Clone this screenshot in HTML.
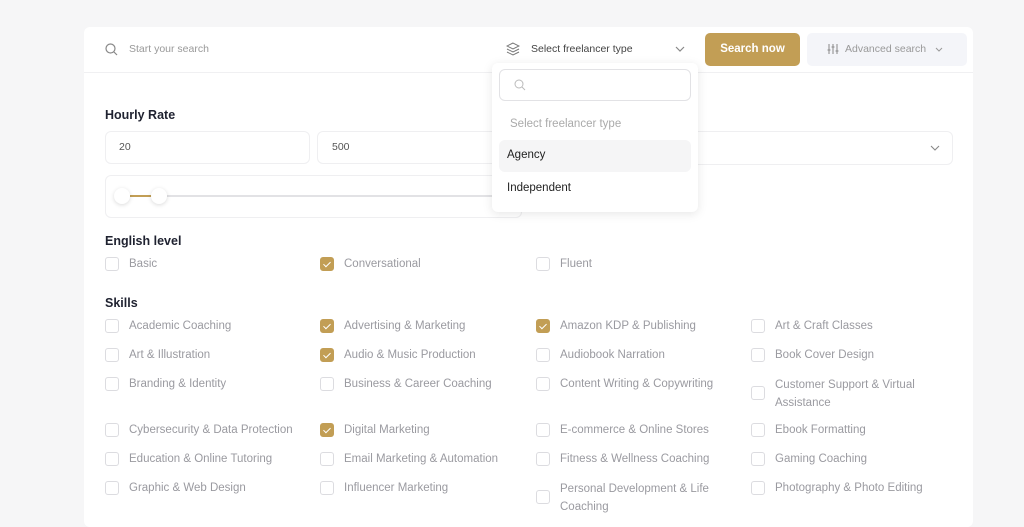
<!DOCTYPE html>
<html><head><style>
*{box-sizing:border-box;margin:0;padding:0}
body{width:1024px;height:519px;background:#f6f6f7;font-family:"Liberation Sans",sans-serif;position:relative;overflow:hidden}
.card{position:absolute;left:84px;top:27px;width:889px;height:500px;background:#fff;border-radius:6px}
.a{position:absolute}
.t{font-size:11.5px;color:#9a9aa0;white-space:nowrap}
.h{font-size:12.5px;font-weight:bold;color:#1f2230}
.cb{position:absolute;width:14px;height:14px;border:1px solid #dcdce0;border-radius:3px;background:#fff}
.cb.on{background:#c29e55;border-color:#c29e55}
.cb.on:after{content:"";position:absolute;left:4px;top:2px;width:3px;height:6px;border:solid #fff;border-width:0 1.5px 1.5px 0;transform:rotate(45deg)}
.box{position:absolute;border:1px solid #efeff1;border-radius:6px;background:#fff}
</style></head><body>
<div class="card"></div>
<div class="a" style="left:84px;top:72px;width:889px;height:1px;background:#f0f0f2"></div>
<svg class="a" style="left:105px;top:43px" width="13" height="13" viewBox="0 0 13 13" fill="none" stroke="#888" stroke-width="1.2"><circle cx="5.5" cy="5.5" r="4.5"/><path d="M9 9l3 3"/></svg>
<div class="a t" style="left:129px;top:43px;font-size:10.5px;color:#999">Start your search</div>
<svg class="a" style="left:506px;top:42px" width="14" height="14" viewBox="0 0 14 14" fill="none" stroke="#777" stroke-width="1"><path d="M7 1L1 4l6 3 6-3z"/><path d="M1 7l6 3 6-3"/><path d="M1 10l6 3 6-3"/></svg>
<div class="a" style="left:531px;top:43px;font-size:10.5px;color:#444">Select freelancer type</div>
<svg class="a" style="left:675px;top:46px" width="10" height="7" viewBox="0 0 10 7" fill="none" stroke="#888" stroke-width="1.2"><path d="M1 1l4 4 4-4"/></svg>
<div class="a" style="left:705px;top:33px;width:95px;height:33px;background:#c29e55;border-radius:5px;color:#fff;font-size:11.5px;font-weight:bold;text-align:center;line-height:33px">Search now</div>
<div class="a" style="left:807px;top:33px;width:160px;height:33px;background:#f4f5f9;border-radius:5px"></div>
<svg class="a" style="left:827px;top:43px" width="12" height="12" viewBox="0 0 12 12" fill="none" stroke="#888" stroke-width="1"><path d="M2 1v10M6 1v10M10 1v10M0.5 7h3M4.5 4h3M8.5 8h3"/></svg>
<div class="a" style="left:845px;top:43px;font-size:10.5px;color:#999">Advanced search</div>
<svg class="a" style="left:935px;top:47px" width="8" height="6" viewBox="0 0 8 6" fill="none" stroke="#999" stroke-width="1"><path d="M1 1l3 3 3-3"/></svg>

<div class="a h" style="left:105px;top:108px">Hourly Rate</div>
<div class="box" style="left:105px;top:131px;width:205px;height:33px"></div>
<div class="a t" style="left:119px;top:141px;font-size:10.5px;color:#555">20</div>
<div class="box" style="left:317px;top:131px;width:200px;height:33px"></div>
<div class="a t" style="left:332px;top:141px;font-size:10.5px;color:#555">500</div>
<div class="box" style="left:105px;top:175px;width:417px;height:43px"></div>
<div class="a" style="left:122px;top:195px;width:375px;height:2px;background:#e2e2e5"></div>
<div class="a" style="left:130px;top:195px;width:22px;height:2px;background:#c29e55"></div>
<div class="a" style="left:114px;top:188px;width:16px;height:16px;border-radius:50%;background:#fff;box-shadow:0 1px 4px rgba(0,0,0,.15)"></div>
<div class="a" style="left:151px;top:188px;width:16px;height:16px;border-radius:50%;background:#fff;box-shadow:0 1px 4px rgba(0,0,0,.15)"></div>
<div class="box" style="left:540px;top:131px;width:413px;height:34px"></div>
<svg class="a" style="left:930px;top:145px" width="10" height="7" viewBox="0 0 10 7" fill="none" stroke="#888" stroke-width="1.1"><path d="M1 1l4 4 4-4"/></svg>

<div class="a" style="left:492px;top:63px;width:206px;height:149px;background:#fff;border-radius:6px;box-shadow:0 2px 10px rgba(0,0,0,.1)"></div>
<div class="box" style="left:499px;top:69px;width:192px;height:32px;border-color:#e2e2e5"></div>
<svg class="a" style="left:514px;top:79px" width="12" height="12" viewBox="0 0 12 12" fill="none" stroke="#bbb" stroke-width="1"><circle cx="5" cy="5" r="4"/><path d="M8 8l3 3"/></svg>
<div class="a t" style="left:510px;top:118px;font-size:11.5px;color:#aaa">Select freelancer type</div>
<div class="a" style="left:499px;top:140px;width:192px;height:32px;background:#f5f5f6;border-radius:6px"></div>
<div class="a" style="left:507px;top:149px;font-size:11.5px;color:#222">Agency</div>
<div class="a" style="left:507px;top:182px;font-size:11.5px;color:#222">Independent</div>

<div class="a h" style="left:105px;top:234px">English level</div>
<div class="cb" style="left:105px;top:257px"></div><div class="a t" style="left:129px;top:258px">Basic</div>
<div class="cb on" style="left:320px;top:257px"></div><div class="a t" style="left:344px;top:258px">Conversational</div>
<div class="cb" style="left:536px;top:257px"></div><div class="a t" style="left:560px;top:258px">Fluent</div>

<div class="a h" style="left:105px;top:296px">Skills</div>
<div class="cb" style="left:105px;top:319px"></div><div class="a t" style="left:129px;top:320px">Academic Coaching</div>
<div class="cb on" style="left:320px;top:319px"></div><div class="a t" style="left:344px;top:320px">Advertising &amp; Marketing</div>
<div class="cb on" style="left:536px;top:319px"></div><div class="a t" style="left:560px;top:320px">Amazon KDP &amp; Publishing</div>
<div class="cb" style="left:751px;top:319px"></div><div class="a t" style="left:775px;top:320px">Art &amp; Craft Classes</div>

<div class="cb" style="left:105px;top:348px"></div><div class="a t" style="left:129px;top:349px">Art &amp; Illustration</div>
<div class="cb on" style="left:320px;top:348px"></div><div class="a t" style="left:344px;top:349px">Audio &amp; Music Production</div>
<div class="cb" style="left:536px;top:348px"></div><div class="a t" style="left:560px;top:349px">Audiobook Narration</div>
<div class="cb" style="left:751px;top:348px"></div><div class="a t" style="left:775px;top:349px">Book Cover Design</div>

<div class="cb" style="left:105px;top:377px"></div><div class="a t" style="left:129px;top:378px">Branding &amp; Identity</div>
<div class="cb" style="left:320px;top:377px"></div><div class="a t" style="left:344px;top:378px">Business &amp; Career Coaching</div>
<div class="cb" style="left:536px;top:377px"></div><div class="a t" style="left:560px;top:378px">Content Writing &amp; Copywriting</div>
<div class="cb" style="left:751px;top:386px"></div><div class="a t" style="left:775px;top:377px;line-height:18px;margin-top:-1px">Customer Support &amp; Virtual<br>Assistance</div>

<div class="cb" style="left:105px;top:423px"></div><div class="a t" style="left:129px;top:424px">Cybersecurity &amp; Data Protection</div>
<div class="cb on" style="left:320px;top:423px"></div><div class="a t" style="left:344px;top:424px">Digital Marketing</div>
<div class="cb" style="left:536px;top:423px"></div><div class="a t" style="left:560px;top:424px">E-commerce &amp; Online Stores</div>
<div class="cb" style="left:751px;top:423px"></div><div class="a t" style="left:775px;top:424px">Ebook Formatting</div>

<div class="cb" style="left:105px;top:452px"></div><div class="a t" style="left:129px;top:453px">Education &amp; Online Tutoring</div>
<div class="cb" style="left:320px;top:452px"></div><div class="a t" style="left:344px;top:453px">Email Marketing &amp; Automation</div>
<div class="cb" style="left:536px;top:452px"></div><div class="a t" style="left:560px;top:453px">Fitness &amp; Wellness Coaching</div>
<div class="cb" style="left:751px;top:452px"></div><div class="a t" style="left:775px;top:453px">Gaming Coaching</div>

<div class="cb" style="left:105px;top:481px"></div><div class="a t" style="left:129px;top:482px">Graphic &amp; Web Design</div>
<div class="cb" style="left:320px;top:481px"></div><div class="a t" style="left:344px;top:482px">Influencer Marketing</div>
<div class="cb" style="left:536px;top:490px"></div><div class="a t" style="left:560px;top:481px;line-height:18px;margin-top:-1px">Personal Development &amp; Life<br>Coaching</div>
<div class="cb" style="left:751px;top:481px"></div><div class="a t" style="left:775px;top:482px">Photography &amp; Photo Editing</div>
</body></html>
